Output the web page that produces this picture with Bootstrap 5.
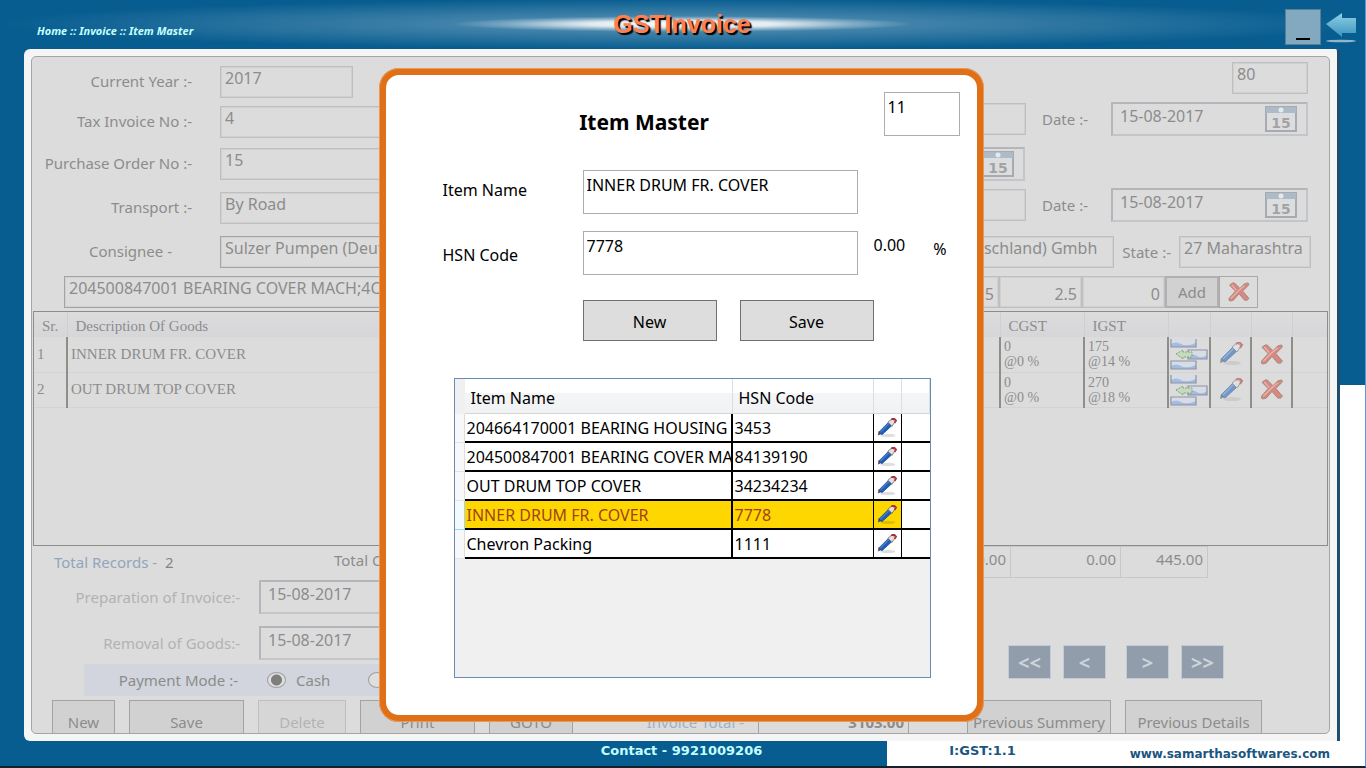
<!DOCTYPE html>
<html lang="en">
<head>
<meta charset="utf-8">
<meta name="viewport" content="width=device-width, initial-scale=1">
<title>GSTInvoice - Item Master</title>
<link href="https://cdn.jsdelivr.net/npm/bootstrap@5.3.0/dist/css/bootstrap.min.css" rel="stylesheet">
<style>
  :root { --blue: #075d90; --ink: #8c8c8c; --panel: #dcdcdc; --edge: #bfbfbf; }
  body { font: 15px/20px "Noto Sans", "Open Sans", sans-serif; background: var(--blue); color: var(--ink); }
  .shell { height: 100vh; min-height: 700px; overflow: hidden; border-right: 1px solid #4aa0dd; border-bottom: 2px solid #14202c; }

  /* top bar */
  .topbar { height: 49px; background:
      radial-gradient(ellipse 17% 8px at 50% 24px, #fff 0, #e4ecf1 40%, rgba(180,205,220,.5) 75%, transparent 100%),
      radial-gradient(ellipse 50% 25px at 50% 24px, #5c93b6 0, rgba(80,140,176,.6) 50%, transparent 100%), var(--blue); }
  .topbar > * { flex: 1 1 0; }
  .crumbs { font: italic bold 11px/16px "Noto Sans", sans-serif; padding: 12px 0 0 37px; }
  .crumbs a, .crumbs { color: #c4ffff; text-decoration: none; }
  .brand-name { font: bold 25px/28px "Liberation Sans", sans-serif; color: #ff7f50; text-shadow: 2px 2px 1px #000; padding: 0 30px 2px 0; }
  .min-btn { width: 36px; height: 36px; background: #83a9c1; border: 1px solid #5c7e94; padding: 0; }
  .min-btn::after { content: ""; display: block; width: 14px; height: 2px; background: #000; margin: 24px auto 0; }
  .plain-btn { background: none; border: 0; padding: 0; line-height: 0; }

  /* main panel */
  .stage { padding: 0 25px 0 24px; min-height: 0; background: linear-gradient(#fff, #fff) right bottom / 25px 356px no-repeat; }
  .frame { background: #f5f5f5; border-right: 3px solid #1f4d70; border-radius: 6px 4px 0 6px; padding: 7px 7px; }
  .panel { background: var(--panel); border: 1px solid #a5a5a5; border-radius: 5px; overflow: hidden; padding-top: 5px; }
  .line { display: flex; align-items: center; height: 44px; flex: none; }
  .line-s { height: 40px; }
  .line-xs { height: 36px; }
  .cap { width: 188px; flex: none; text-align: right; padding: 0 28px 3px 0; }
  .cap-r { width: 69px; flex: none; }
  .half { width: 50%; flex: none; display: flex; align-items: center; }
  .rest { flex: 1; display: flex; align-items: center; justify-content: flex-end; padding-right: 21px; }
  .lift { padding-bottom: 6px; }
  .box { height: 32px; min-width: 0; border: 1px solid var(--edge); outline: 1px solid #d0d0d0; outline-offset: -2px; background: transparent; color: var(--ink); font-size: 16px; padding: 0 4px 8px; border-radius: 0; }
  .box-dark { border-color: #a4a4a4; }
  .datebox { display: flex; align-items: center; width: 197px; height: 34px; border: 2px solid var(--edge); border-color: #b3b6ba #c2c5c9 #c2c5c9 #b3b6ba; padding: 0 9px 0 7px; }
  .datebox input { flex: 1; min-width: 0; border: 0; background: none; color: var(--ink); font-size: 16px; padding: 0 0 6px; }
  .w-80 { width: 76px; } .w-131 { width: 132px; } .w-133 { width: 133px; } .w-84 { width: 83px; }
  .w-hid { width: 150px; }
  .end-a { padding-right: 304px; }
  .end-b { padding-right: 71px; }
  .end-c { padding-right: 121px; }
  .end-d { padding-right: 18px; }

  .goods-wrap { margin: 1px 1px 0; height: 235px; border: 1px solid #8c8c8c; flex: none; }
  .goods { width: 100%; table-layout: fixed; border-collapse: collapse; font: 15px/17px "Liberation Serif", serif; }
  .goods th { height: 25px; font-weight: 400; padding: 3px 8px 0; background: linear-gradient(#dcdcdd, #d6d6d9); border-right: 1px solid #cfcfd2; }
  .goods td { height: 35px; padding: 0 3px; border-right: 2px solid #8f8f8a; border-bottom: 1px solid #d3d3d3; overflow: hidden; white-space: nowrap; }
  .goods td:last-child, .goods th:last-child { border-right: 0; }
  .goods .two { font-size: 14px; line-height: 15px; }
  .goods .ic { padding: 0; text-align: center; line-height: 0; }

  .records { width: 302px; padding: 6px 0 0 22px; color: #91a5bd; }
  .records output { color: #858585; }
  .totals { height: 34px; }
  .total-box { height: 32px; border: 1px solid #c8c8c8; padding: 2px 4px 0; }
  .cap-d { width: 227px; flex: none; text-align: right; padding-right: 19px; color: #b2b2b2; }
  .datewide { width: 240px; }
  .pay { margin-left: 52px; width: 420px; height: 32px; background: #d2d5dd; }
  .pay .cap-p { width: 173px; text-align: right; padding-right: 19px; }
  .pay input { appearance: none; width: 19px; height: 16px; margin: 0 10px; border: 1px solid #9f9f9f; border-radius: 50%; background: #dedede; }
  .pay label + input { margin-left: 38px; }
  .pay input:checked { background: radial-gradient(circle, #7e7e7e 0 5px, #dedede 6px); }
  .navs { padding-right: 105px; padding-bottom: 17px; gap: 12px; }
  .nav-b { width: 43px; height: 34px; background: #929dab; border: 1px solid #c3ccd6; color: #ccd4dc; font: bold 20px/20px "Noto Sans", sans-serif; padding: 2px 0 0; }
  .lower { padding: 4px 67px 0 20px; gap: 14px; }
  .lower-b { height: 42px; border: 1px solid #a3a3a3; background: #d1d1d1; color: var(--ink); padding: 2px 0 0; flex: none; }
  .b-62 { width: 63px; } .b-115 { width: 115px; } .b-88 { width: 88px; } .b-85 { width: 84px; } .b-140 { width: 144px; } .b-137 { width: 137px; } .b-151 { width: 151px; margin-right: 44px; }
  .lower label { color: #9fb0c4; padding-top: 12px; }
  .add-b { width: 54px; height: 32px; border: 2px solid #b0b0b0; background: #d1d1d1; color: var(--ink); padding: 0; }
  .del-b { width: 39px; height: 32px; border: 1px solid #a8a8a8; background: none; padding: 0; line-height: 0; }

  /* footer */
  .foot { height: 25px; font: bold 13px/20px "Comic Sans MS", "DejaVu Sans", sans-serif; flex: none; }
  .foot-l { width: 65%; text-align: right; padding-right: 125px; color: #c4ffff; }
  .foot-r { flex: 1; background: #fff; color: #1b5680; padding: 0 35px 0 62px; }
  .foot-r a { color: inherit; text-decoration: none; font-size: 12px; padding-top: 3px; }

  /* item dialog */
  .veil { position: absolute; inset: 0; display: flex; justify-content: center; align-items: flex-start; padding: 68px 3px 0 0; }
  .dlg { width: 605px; border: 7px solid #e07018; border-radius: 20px; background: #fff; color: #000; padding: 17px 17px 37px 57px; font-size: 16px; outline: 1px solid rgba(240,180,130,.6); outline-offset: -1px; }
  .dlg h1 { font-size: 21px; line-height: 28px; font-weight: 700; margin: 16px 0 0; flex: 1; text-align: center; padding-right: 38px; }
  .dlg .tb { height: 44px; border: 1px solid #abadb3; padding: 0 3px 14px; color: #000; }
  .tb-n { width: 76px; }
  .tb-w { width: 275px; }
  .dlg label { width: 140px; flex: none; padding-bottom: 4px; }
  .fld-1 { margin-top: 34px; }
  .fld-2 { margin-top: 17px; }
  .acts { margin: 25px 0 0 140px; gap: 23px; }
  .act { width: 134px; height: 41px; border: 1px solid #707070; background: #ddd; color: #000; padding: 2px 0 0; }
  .list-wrap { margin: 37px 29px 0 11px; height: 300px; border: 1px solid #688caf; background: #f0f0f0; overflow: hidden; }
  .items { width: 100%; table-layout: fixed; border-collapse: separate; border-spacing: 0; line-height: 22px; }
  .items th { height: 35px; font-weight: 400; padding: 3px 6px 0; background: linear-gradient(#fff 40%, #f4f5f6 42%, #f1f2f4); border-right: 1px solid #dcdddf; border-bottom: 1px solid #d5d5d5; }
  .items th:first-child { background: #f0f0f0; border: 0; }
  .items td { height: 29px; padding: 1px 2px 0; background: #fff; border-right: 1px solid #000; border-bottom: 2px solid #000; overflow: hidden; white-space: nowrap; }
  .items td:nth-child(2) { border-right-width: 2px; }
  .items td:first-child { border-right: 1px solid #ddd; border-bottom: 1px solid #e3e3e3; background: #f8f8f8; }
  .items td:last-child { border-right: 0; }
  .items .ic { padding: 0; text-align: center; line-height: 0; }
  .items .sel td:not(:first-child):not(:last-child) { background: #ffd700; color: #a0421a; }
  .items .sel td:first-child { border-color: #9fd3ee; background: #f2fafe; }
</style>
</head>
<body>
<svg width="0" height="0" class="position-absolute" aria-hidden="true">
  <defs>
    <linearGradient id="gArrow" x1="0" y1="0" x2="0" y2="1"><stop offset="0" stop-color="#8fd0e6"/><stop offset="1" stop-color="#3a93bd"/></linearGradient>
    <linearGradient id="gCard" x1="0" y1="0" x2="0" y2="1"><stop offset="0" stop-color="#dfe3e8"/><stop offset=".5" stop-color="#d0d9e6"/><stop offset="1" stop-color="#9fb9e2"/></linearGradient>
  </defs>
  <symbol id="pen" viewBox="0 0 24 24">
    <ellipse cx="13" cy="21" rx="9" ry="2" fill="#000" opacity=".13"/>
    <path d="M1 21l1-5 4 3z" fill="#4f5258"/>
    <path d="M2 17L14 5l4 4L6 20z" fill="#1f5fb8" stroke="#123c80" stroke-width=".8"/>
    <path d="M4 17L15 6" stroke="#5b94dc" stroke-width="1.2"/>
    <path d="M13 5l5-4 4 3-4 6z" fill="#e4e0e0" stroke="#555" stroke-width=".8"/>
    <path d="M17 2l3-2 3 3-2 3" fill="none" stroke="#a8323a" stroke-width="2"/>
  </symbol>
  <symbol id="cross" viewBox="0 0 24 22">
    <path d="M2 3l3-2h2l6 6 5-5 4-1 1 2-7 7 7 8-2 2h-3l-6-7-6 7-4 1-1-1v-2l7-8-6-6z" fill="#d88782" stroke="#a08c74" stroke-width="1"/>
    <path d="M4 3l5 6M3 18l8-8 7-6" stroke="#ebb9b4" stroke-width="1.2" fill="none"/>
  </symbol>
  <symbol id="insert" viewBox="0 0 38 32">
    <path d="M1 1h25v8H1zM18 12h19v9H18zM1 23h25v8H1z" fill="#d9dde3"/>
    <path d="M1 6q5-3 10 0t15-1v4H1zM18 18q5-3 9 0t10-1v4H18zM1 28q5-3 10 0t15-1v4H1z" fill="#a3bce3"/>
    <path d="M1 1v8h25V1M18 12h19v9H18zM1 31V23h25v8z" fill="none" stroke="#8b93a8" stroke-width="1.2"/>
    <path d="M6 16l7-4v2h9v5h-9v2z" fill="#c5dcbc" stroke="#86a37c" stroke-width="1" stroke-dasharray="2 1"/>
  </symbol>
  <symbol id="cal" viewBox="0 0 32 26">
    <rect x="1" y="1" width="30" height="24" fill="#dcdddf" stroke="#a8aaad" stroke-width="2"/>
    <path d="M1 1h30v6H1z" fill="#adbac8"/><circle cx="16" cy="4" r="2.5" fill="#e6e9ec"/>
    <text x="16" y="22" text-anchor="middle" font-family="DejaVu Sans" font-weight="bold" font-size="14" fill="#a3a3a3">15</text>
  </symbol>
</svg>

<div class="shell d-flex flex-column position-relative">
  <header class="topbar d-flex align-items-center flex-shrink-0">
    <nav class="crumbs" aria-label="Breadcrumb"><a href="#">Home</a> :: <a href="#">Invoice</a> :: <a href="#">Item Master</a></nav>
    <div class="brand-name text-center">GSTInvoice</div>
    <div class="d-flex justify-content-end align-items-center gap-1 pe-2 pt-1">
      <button class="min-btn" aria-label="Minimize"></button>
      <button class="plain-btn" aria-label="Back"><svg width="32" height="32" viewBox="0 0 32 32"><path d="M1 13L17 2v5h14v15H17v4z" fill="url(#gArrow)"/><ellipse cx="16" cy="30" rx="15" ry="1.3" fill="#8fb6cd"/></svg></button>
    </div>
  </header>

  <main class="stage flex-grow-1 d-flex">
    <div class="frame flex-grow-1 d-flex">
      <form class="panel flex-grow-1 d-flex flex-column">
        <div class="line line-s">
          <label class="cap" for="yr">Current Year :-</label><input id="yr" class="box w-133" value="2017">
          <div class="rest align-self-start"><input class="box w-80" aria-label="Number" value="80"></div>
        </div>
        <div class="line line-s">
          <div class="half"><label class="cap" for="inv">Tax Invoice No :-</label><input id="inv" class="box flex-grow-1" value="4"></div>
          <div class="rest lift"><input class="box w-hid" aria-label="Reference"><label class="cap-r ms-3" for="d1">Date :-</label>
            <div class="datebox"><input id="d1" value="15-08-2017"><svg width="32" height="26"><use href="#cal"/></svg></div></div>
        </div>
        <div class="line">
          <div class="half"><label class="cap" for="po">Purchase Order No :-</label><input id="po" class="box flex-grow-1" value="15"></div>
          <div class="rest end-a"><div class="datebox"><input aria-label="Order date"><svg width="32" height="26"><use href="#cal"/></svg></div></div>
        </div>
        <div class="line">
          <div class="half"><label class="cap" for="tr">Transport :-</label><input id="tr" class="box flex-grow-1" value="By Road"></div>
          <div class="rest lift"><input class="box w-hid" aria-label="Vehicle"><label class="cap-r ms-3" for="d2">Date :-</label>
            <div class="datebox"><input id="d2" value="15-08-2017"><svg width="32" height="26"><use href="#cal"/></svg></div></div>
        </div>
        <div class="line">
          <div class="half"><label class="cap pe-5" for="con">Consignee -</label><input id="con" class="box box-dark flex-grow-1" value="Sulzer Pumpen (Deutschland) Gmbh"></div>
          <div class="rest end-d"><input class="box flex-grow-1 text-end pe-3" aria-label="Buyer" value="Sulzer Pumpen (Deutschland) Gmbh"><label class="ms-2 me-2" for="st">State :-</label><input id="st" class="box w-131" value="27 Maharashtra"></div>
        </div>
        <div class="line line-xs">
          <div class="half ps-3"><input class="box box-dark flex-grow-1 ms-3" aria-label="Item" value="204500847001 BEARING COVER MACH;4C"></div>
          <div class="rest end-b">
            <input class="box w-84 text-end pt-2 pb-1" aria-label="SGST" value="2.5">
            <input class="box w-84 text-end pt-2 pb-1" aria-label="CGST" value="2.5">
            <input class="box w-84 text-end pt-2 pb-1" aria-label="IGST" value="0">
            <button type="button" class="add-b">Add</button><button type="button" class="del-b" aria-label="Clear"><svg width="22" height="20"><use href="#cross"/></svg></button>
          </div>
        </div>

        <div class="goods-wrap">
          <table class="goods">
            <colgroup><col style="width:33px"><col><col style="width:84px"><col style="width:84px"><col style="width:42px"><col style="width:41px"><col style="width:41px"><col style="width:35px"></colgroup>
            <thead><tr><th>Sr.</th><th>Description Of Goods</th><th>CGST</th><th>IGST</th><th></th><th></th><th></th><th></th></tr></thead>
            <tbody>
              <tr><td>1</td><td>INNER DRUM FR. COVER</td><td class="two">0<br>@0 %</td><td class="two">175<br>@14 %</td><td class="ic"><svg width="38" height="32"><use href="#insert"/></svg></td><td class="ic"><svg width="26" height="24" opacity=".55"><use href="#pen"/></svg></td><td class="ic"><svg width="24" height="21"><use href="#cross"/></svg></td><td></td></tr>
              <tr><td>2</td><td>OUT DRUM TOP COVER</td><td class="two">0<br>@0 %</td><td class="two">270<br>@18 %</td><td class="ic"><svg width="38" height="32"><use href="#insert"/></svg></td><td class="ic"><svg width="26" height="24" opacity=".55"><use href="#pen"/></svg></td><td class="ic"><svg width="24" height="21"><use href="#cross"/></svg></td><td></td></tr>
            </tbody>
          </table>
        </div>

        <div class="totals d-flex align-items-start flex-shrink-0">
          <div class="half align-items-start">
            <div class="records text-nowrap">Total Records - &nbsp;<output>2</output></div>
            <div class="pt-1 text-nowrap">Total Of Goods</div>
          </div>
          <div class="rest end-c">
            <div class="total-box w-84 text-end">0.00</div><div class="total-box text-end border-start-0" style="width:110px">0.00</div><div class="total-box text-end border-start-0" style="width:87px">445.00</div>
          </div>
        </div>

        <div class="d-flex flex-shrink-0">
          <div class="half d-block">
            <div class="d-flex align-items-center mb-2 pb-1"><label class="cap-d" for="p1">Preparation of Invoice:-</label><div class="datebox datewide"><input id="p1" value="15-08-2017"></div></div>
            <div class="d-flex align-items-center"><label class="cap-d" for="p2">Removal of Goods:-</label><div class="datebox datewide"><input id="p2" value="15-08-2017"></div></div>
            <div class="pay d-flex align-items-center mt-1"><span class="cap-p">Payment Mode :-</span><input type="radio" name="pm" id="cash" checked><label for="cash">Cash</label><input type="radio" name="pm" id="credit"><label for="credit">Credit</label></div>
          </div>
          <div class="rest navs align-items-end">
            <button type="button" class="nav-b">&lt;&lt;</button><button type="button" class="nav-b me-2">&lt;</button>
            <button type="button" class="nav-b">&gt;</button><button type="button" class="nav-b">&gt;&gt;</button>
          </div>
        </div>

        <div class="lower d-flex flex-shrink-0">
          <button type="button" class="lower-b b-62">New</button>
          <button type="button" class="lower-b b-115">Save</button>
          <button type="button" class="lower-b b-88 opacity-50">Delete</button>
          <button type="button" class="lower-b b-115">Print</button>
          <button type="button" class="lower-b b-85">GOTO</button>
          <label class="ms-auto text-nowrap" for="tot">Invoice Total -</label><input id="tot" class="lower-b text-end b-151 bg-transparent fw-bold pe-1" value="3103.00">
          <button type="button" class="lower-b b-140 text-nowrap">Previous Summery</button><button type="button" class="lower-b b-137 text-nowrap">Previous Details</button>
        </div>
      </form>
    </div>
  </main>

  <footer class="foot d-flex">
    <div class="foot-l">Contact - 9921009206</div>
    <div class="foot-r d-flex justify-content-between"><span>I:GST:1.1</span><a href="#">www.samarthasoftwares.com</a></div>
  </footer>

  <div class="veil">
    <form class="dlg" role="dialog" aria-labelledby="ttl">
      <div class="d-flex"><h1 id="ttl">Item Master</h1><input class="tb tb-n" aria-label="Item number" value="11"></div>
      <div class="d-flex align-items-center fld-1"><label for="nm">Item Name</label><input id="nm" class="tb tb-w" value="INNER DRUM FR. COVER"></div>
      <div class="d-flex align-items-center fld-2"><label class="pt-1 pb-0" for="hsn">HSN Code</label><input id="hsn" class="tb tb-w" value="7778"><span class="ms-3 pb-3">0.00</span><span class="ms-4 pb-2 ps-1">%</span></div>
      <div class="d-flex acts"><button type="button" class="act">New</button><button type="button" class="act">Save</button></div>
      <div class="list-wrap">
        <table class="items">
          <colgroup><col style="width:10px"><col><col style="width:141px"><col style="width:28px"><col style="width:28px"></colgroup>
          <thead><tr><th></th><th>Item Name</th><th>HSN Code</th><th></th><th></th></tr></thead>
          <tbody>
            <tr><td></td><td>204664170001 BEARING HOUSING</td><td>3453</td><td class="ic"><svg width="20" height="20"><use href="#pen"/></svg></td><td></td></tr>
            <tr><td></td><td>204500847001 BEARING COVER MACH;4C</td><td>84139190</td><td class="ic"><svg width="20" height="20"><use href="#pen"/></svg></td><td></td></tr>
            <tr><td></td><td>OUT DRUM TOP COVER</td><td>34234234</td><td class="ic"><svg width="20" height="20"><use href="#pen"/></svg></td><td></td></tr>
            <tr class="sel"><td></td><td>INNER DRUM FR. COVER</td><td>7778</td><td class="ic"><svg width="20" height="20"><use href="#pen"/></svg></td><td></td></tr>
            <tr><td></td><td>Chevron Packing</td><td>1111</td><td class="ic"><svg width="20" height="20"><use href="#pen"/></svg></td><td></td></tr>
          </tbody>
        </table>
      </div>
    </form>
  </div>
</div>
<script src="https://cdn.jsdelivr.net/npm/bootstrap@5.3.0/dist/js/bootstrap.bundle.min.js"></script>
</body>
</html>
